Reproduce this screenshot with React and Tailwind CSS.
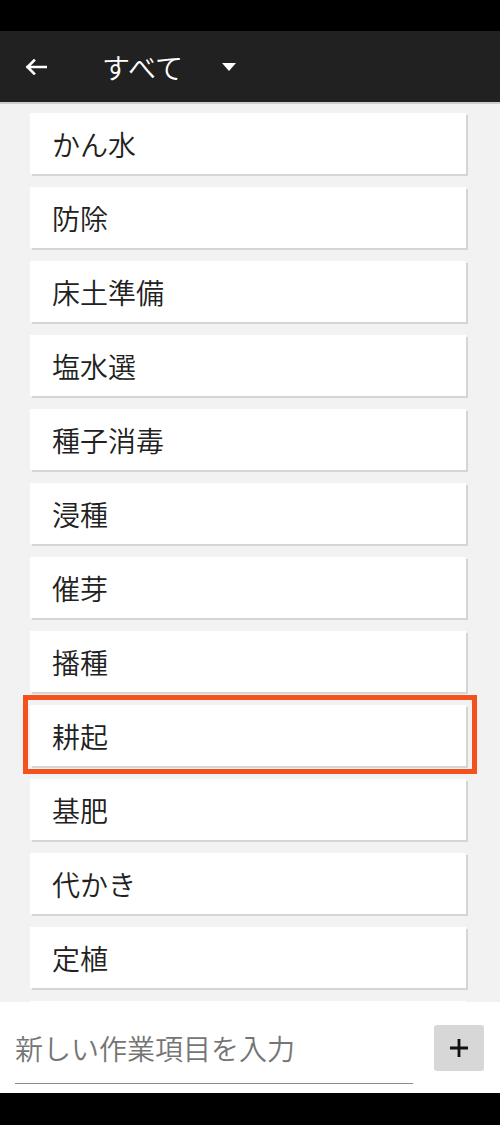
import React from "react";

const items = [
  "かん水",
  "防除",
  "床土準備",
  "塩水選",
  "種子消毒",
  "浸種",
  "催芽",
  "播種",
  "耕起",
  "基肥",
  "代かき",
  "定植",
  "田植え",
];

const font = { fontFamily: '"Noto Sans CJK JP", "Noto Sans", sans-serif' };

export default function App() {
  return (
    <div className="h-[1125px] w-[500px] flex flex-col overflow-hidden bg-black font-[350]" style={font}>
      {/* Status bar */}
      <div className="h-[31px] bg-black shrink-0" />

      {/* App bar */}
      <div className="h-[71px] shrink-0 bg-[#212121] flex items-center pl-[25px]">
        <svg width="22" height="16" viewBox="0 0 22 16" className="shrink-0">
          <path
            d="M21 8H2.5M9 1.5L2.5 8L9 14.5"
            fill="none"
            stroke="white"
            strokeWidth="2.6"
            strokeLinecap="square"
          />
        </svg>
        <span className="ml-[55px] text-[28px] leading-none text-white">すべて</span>
        <svg width="14" height="8" viewBox="0 0 14 8" className="ml-[39px] shrink-0">
          <path d="M0 0H14L7 8Z" fill="white" />
        </svg>
      </div>
      <div className="h-[2px] shrink-0 bg-[#cdcdcd]" />

      {/* List */}
      <div className="flex-1 overflow-hidden bg-[#f2f2f2] pt-[9px]">
        {items.map((it) => (
          <div
            key={it}
            className="relative ml-[30px] w-[436px] h-[61px] mb-[13px] bg-white shadow-[2px_2px_0_#d5d5d5] flex items-center pl-[22px]"
          >
            <span className="text-[28px] leading-none text-[#212121]">{it}</span>
            {it === "耕起" && (
              <div className="absolute left-[-7px] top-[-10px] right-[-11px] bottom-[-8px] border-[5px] border-[#f4511e]" />
            )}
          </div>
        ))}
      </div>

      {/* Input panel */}
      <div className="h-[91px] shrink-0 bg-white flex items-start pl-[15px] pr-[16px]">
        <div className="w-[398px] mt-[20px] h-[62px] border-b border-[#8a8a8a]">
          <input
            type="text"
            placeholder="新しい作業項目を入力"
            className="w-full h-[52px] p-0 bg-transparent outline-none text-[28px] leading-[52px] font-[350] text-[#212121] placeholder-[#757575]"
            style={font}
          />
        </div>
        <button className="ml-auto mt-[23px] w-[50px] h-[46px] rounded-[3px] bg-[#d6d7d6] flex items-center justify-center">
          <svg width="20" height="20" viewBox="0 0 20 20">
            <path d="M10 1V19M1 10H19" stroke="#111" strokeWidth="2.8" />
          </svg>
        </button>
      </div>

      {/* Nav bar */}
      <div className="h-[32px] shrink-0 bg-black" />
    </div>
  );
}
